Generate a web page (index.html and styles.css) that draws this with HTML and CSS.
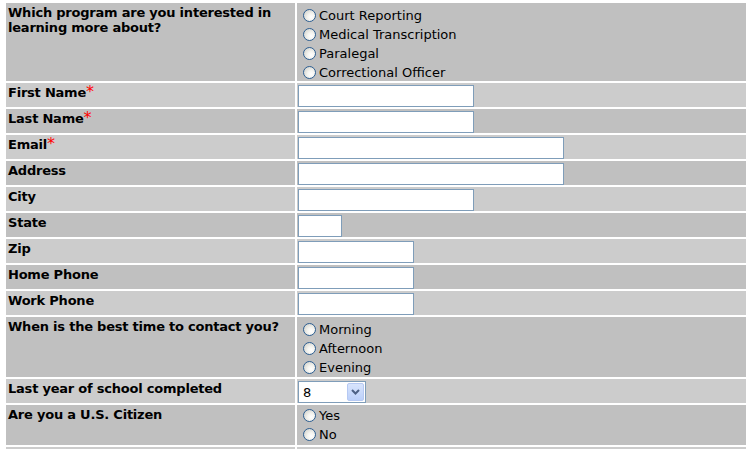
FILE: index.html
```html
<!DOCTYPE html>
<html>
<head>
<meta charset="utf-8">
<link rel="stylesheet" href="styles.css">
</head>
<body>
<form class="page">
<table class="form-table">
  <tr class="dark tall4">
    <td class="label">Which program are you interested in learning more about?</td>
    <td class="field">
      <label class="opt"><input type="radio" name="program"><span>Court Reporting</span></label>
      <label class="opt"><input type="radio" name="program"><span>Medical Transcription</span></label>
      <label class="opt"><input type="radio" name="program"><span>Paralegal</span></label>
      <label class="opt"><input type="radio" name="program"><span>Correctional Officer</span></label>
    </td>
  </tr>
  <tr class="light">
    <td class="label">First Name<span class="req">*</span></td>
    <td class="field"><input class="txt w-md" type="text"></td>
  </tr>
  <tr class="dark">
    <td class="label">Last Name<span class="req">*</span></td>
    <td class="field"><input class="txt w-md" type="text"></td>
  </tr>
  <tr class="light">
    <td class="label">Email<span class="req">*</span></td>
    <td class="field"><input class="txt w-lg" type="text"></td>
  </tr>
  <tr class="dark">
    <td class="label">Address</td>
    <td class="field"><input class="txt w-lg" type="text"></td>
  </tr>
  <tr class="light">
    <td class="label">City</td>
    <td class="field"><input class="txt w-md" type="text"></td>
  </tr>
  <tr class="dark">
    <td class="label">State</td>
    <td class="field"><input class="txt w-xs" type="text"></td>
  </tr>
  <tr class="light">
    <td class="label">Zip</td>
    <td class="field"><input class="txt w-sm" type="text"></td>
  </tr>
  <tr class="dark">
    <td class="label">Home Phone</td>
    <td class="field"><input class="txt w-sm" type="text"></td>
  </tr>
  <tr class="light">
    <td class="label">Work Phone</td>
    <td class="field"><input class="txt w-sm" type="text"></td>
  </tr>
  <tr class="dark tall3">
    <td class="label">When is the best time to contact you?</td>
    <td class="field">
      <label class="opt"><input type="radio" name="time"><span>Morning</span></label>
      <label class="opt"><input type="radio" name="time"><span>Afternoon</span></label>
      <label class="opt"><input type="radio" name="time"><span>Evening</span></label>
    </td>
  </tr>
  <tr class="light">
    <td class="label">Last year of school completed</td>
    <td class="field">
      <span class="selectbox">
        <select class="sel"><option>8</option><option>9</option><option>10</option><option>11</option><option>12</option></select>
        <span class="drop"><svg width="9" height="6" viewBox="0 0 9 6"><path d="M1 1 L4.5 4.5 L8 1" fill="none" stroke="#4d6185" stroke-width="2"/></svg></span>
      </span>
    </td>
  </tr>
  <tr class="dark tall2">
    <td class="label">Are you a U.S. Citizen</td>
    <td class="field">
      <label class="opt"><input type="radio" name="citizen"><span>Yes</span></label>
      <label class="opt"><input type="radio" name="citizen"><span>No</span></label>
    </td>
  </tr>
  <tr class="light short">
    <td class="label"></td>
    <td class="field"></td>
  </tr>
</table>
</form>
</body>
</html>
```

FILE: styles.css
```css
html, body {
  margin: 0;
  padding: 0;
  background: #ffffff;
  overflow: hidden;
}

body {
  font-family: "DejaVu Sans", Verdana, sans-serif;
  font-size: 13px;
  color: #000000;
}

.page {
  margin: 0;
  padding: 1px 0 0 4px;
}

.form-table {
  border-collapse: separate;
  border-spacing: 2px;
  width: 744px;
  margin: 0;
}

.form-table td {
  padding: 0;
  vertical-align: top;
  height: 24px;
  box-sizing: border-box;
}

.form-table tr.tall4 td { height: 77px; }
.form-table tr.tall3 td { height: 60px; }
.form-table tr.tall2 td { height: 40px; }
.form-table tr.short td { height: 3px; }

.dark td { background: #c0c0c0; }
.light td { background: #cccccc; }

.label {
  width: 289px;
  font-weight: bold;
  line-height: 15px;
  letter-spacing: -0.22px;
  padding: 2px 2px 0 2px !important;
}

.req {
  color: #ff0000;
  font-weight: normal;
  font-size: 16px;
  line-height: 0;
  letter-spacing: 0;
}

.field {
  width: 449px;
  padding: 1px 0 0 1px !important;
}

.opt {
  display: flex;
  align-items: center;
  box-sizing: border-box;
  height: 19px;
  padding: 2px 0 0 5px;
  line-height: 17px;
}

.tall4 .opt:first-child,
.tall3 .opt:first-child {
  margin-top: 1px;
}

.tall2 .opt:first-child {
  margin-top: -1px;
}

.opt input {
  -webkit-appearance: none;
  appearance: none;
  width: 13px;
  height: 13px;
  margin: 0 3px 0 0;
  border: 1px solid #2c5e92;
  border-radius: 50%;
  background: radial-gradient(circle at 65% 65%, #ffffff 0%, #f4f4f0 35%, #d6d6d0 80%);
  box-sizing: border-box;
  flex: none;
}

.txt {
  display: block;
  box-sizing: border-box;
  height: 22px;
  margin: 1px 0 0 0;
  border: 1px solid #7f9db9;
  background: #ffffff;
  padding: 0 2px;
  font-family: "DejaVu Sans", sans-serif;
  font-size: 13px;
}

.w-xs { width: 44px; }
.w-sm { width: 116px; }
.w-md { width: 176px; }
.w-lg { width: 266px; }

.selectbox {
  display: flex;
  align-items: center;
  width: 68px;
  height: 22px;
  margin-top: 1px;
  box-sizing: border-box;
  border: 1px solid #7f9db9;
  background: #ffffff;
  padding-right: 1px;
}

.sel {
  -webkit-appearance: none;
  appearance: none;
  border: 0;
  outline: 0;
  background: transparent;
  flex: 1;
  min-width: 0;
  height: 20px;
  padding: 0 0 0 4px;
  margin: 0;
  font-family: "DejaVu Sans", sans-serif;
  font-size: 13px;
  color: #000000;
}

.drop {
  display: flex;
  align-items: center;
  justify-content: center;
  width: 17px;
  height: 18px;
  box-sizing: border-box;
  border: 1px solid #b6c9f3;
  border-radius: 2px;
  background: linear-gradient(#d8e4fc, #bcd0fa);
  flex: none;
}
```
